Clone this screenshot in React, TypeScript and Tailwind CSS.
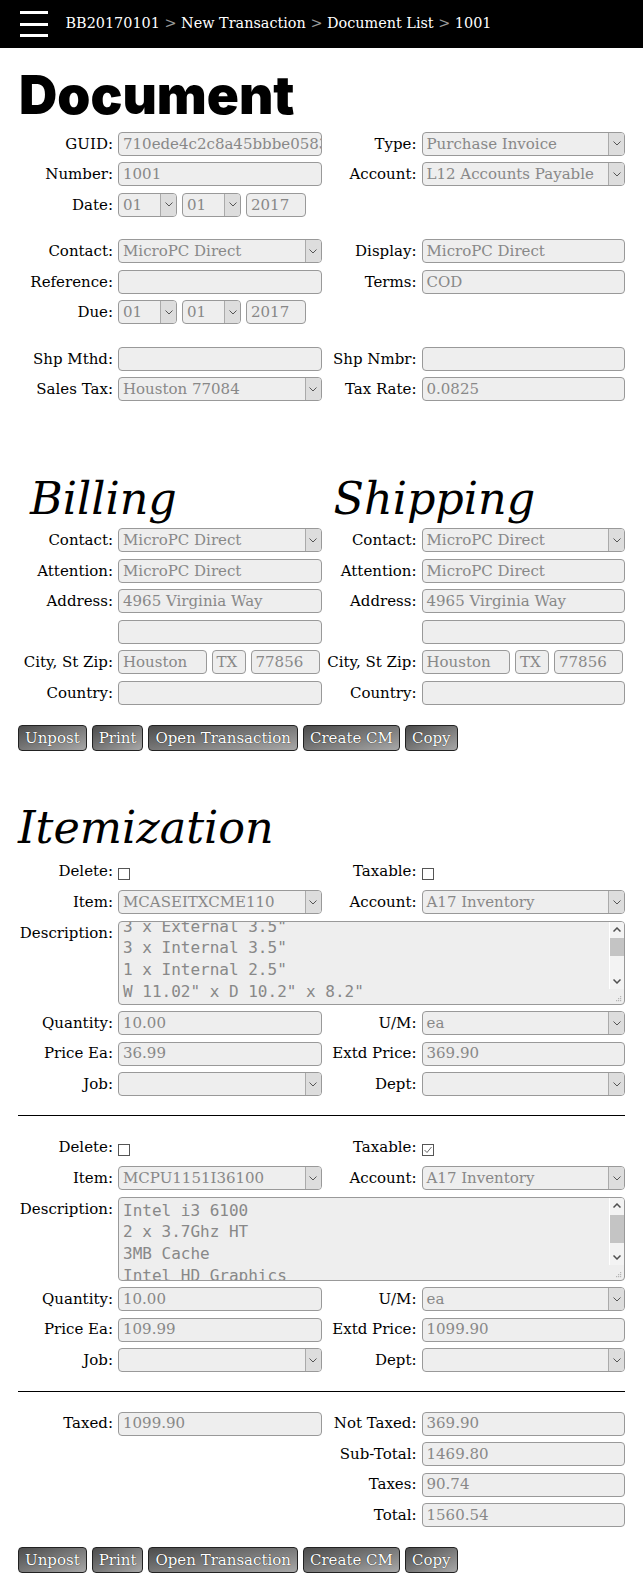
import React from "react";

function Chevron() {
  return (
    <svg width="8" height="5" viewBox="0 0 8 5">
      <path d="M0.5 0.5 L4 4 L7.5 0.5" fill="none" stroke="#555" strokeWidth="1" />
    </svg>
  );
}

function Input({ value = "", w = "w-full" }: { value?: string; w?: string }) {
  return (
    <div className={`${w} h-[24px] border border-[#999] rounded-[4px] bg-[#eeeeee] text-[#888] pl-[4px] flex items-center overflow-hidden whitespace-nowrap`}>
      {value}
    </div>
  );
}

function Select({ value = "", w = "w-full" }: { value?: string; w?: string }) {
  return (
    <div className={`${w} h-[24px] border border-[#999] rounded-[4px] bg-[#eeeeee] text-[#888] flex items-center overflow-hidden whitespace-nowrap`}>
      <span className="flex-1 min-w-0 pl-[4px] overflow-hidden">{value}</span>
      <span className="h-full w-[16px] shrink-0 border-l border-[#aaa] bg-[#dddddd] flex items-center justify-center">
        <Chevron />
      </span>
    </div>
  );
}

function Check({ checked = false }: { checked?: boolean }) {
  return (
    <div className="w-[12px] h-[12px] border border-[#555] bg-white mt-[4px] flex items-center justify-center">
      {checked && (
        <svg width="10" height="10" viewBox="0 0 10 10">
          <path d="M1.5 5 L4 7.5 L8.5 2" fill="none" stroke="#666" strokeWidth="1" />
        </svg>
      )}
    </div>
  );
}

function Field({ label, children }: { label?: string; children?: React.ReactNode }) {
  return (
    <div className="flex items-center gap-[5px] h-[30.5px]">
      <div className="w-[95px] shrink-0 text-right whitespace-nowrap">{label}</div>
      <div className="flex-1 min-w-0 flex items-center gap-[5px]">{children}</div>
    </div>
  );
}

function DateRow() {
  return (
    <>
      <Select value="01" w="w-[59px]" />
      <Select value="01" w="w-[59px]" />
      <Input value="2017" w="w-[60px]" />
    </>
  );
}

function TextArea({ lines, offset, thumbTop, thumbH }: { lines: string[]; offset: string; thumbTop: string; thumbH: string }) {
  return (
    <div className="h-[84px] border border-[#999] rounded-[4px] bg-[#eeeeee] flex overflow-hidden">
      <div className="flex-1 min-w-0 pl-[4px] overflow-hidden font-['DejaVu_Sans_Mono',monospace] text-[16px] leading-[21.8px] text-[#888]">
        <div className={offset}>
          {lines.map((l, i) => (
            <div key={i} className="whitespace-pre">{l}</div>
          ))}
        </div>
      </div>
      <div className="w-[15px] shrink-0 flex flex-col">
        <div className="flex-1 bg-[#f3f3f3] border-l border-white flex flex-col items-center">
          <div className="h-[15px] flex items-center justify-center">
            <svg width="8" height="5" viewBox="0 0 8 5"><path d="M0.5 4.5 L4 1 L7.5 4.5" fill="none" stroke="#505050" strokeWidth="1.5" /></svg>
          </div>
          <div className={`w-full bg-[#c4c4c4] ${thumbTop} ${thumbH}`}></div>
          <div className="mt-auto h-[15px] flex items-center justify-center">
            <svg width="8" height="5" viewBox="0 0 8 5"><path d="M0.5 0.5 L4 4 L7.5 0.5" fill="none" stroke="#505050" strokeWidth="1.5" /></svg>
          </div>
        </div>
        <div className="h-[15px] flex items-end justify-end pr-[2px] pb-[2px]">
          <svg width="7" height="7" viewBox="0 0 7 7" fill="#b5b5b5">
            <rect x="5" y="1" width="1.2" height="1.2" />
            <rect x="3" y="3" width="1.2" height="1.2" />
            <rect x="5" y="3" width="1.2" height="1.2" />
            <rect x="1" y="5" width="1.2" height="1.2" />
            <rect x="3" y="5" width="1.2" height="1.2" />
            <rect x="5" y="5" width="1.2" height="1.2" />
          </svg>
        </div>
      </div>
    </div>
  );
}

function Buttons({ className }: { className: string }) {
  const labels = ["Unpost", "Print", "Open Transaction", "Create CM", "Copy"];
  return (
    <div className={`flex gap-[5px] ${className}`}>
      {labels.map((l) => (
        <button
          key={l}
          className="h-[26px] px-[6px] rounded-[4px] border border-[#222] bg-linear-to-br from-[#4c4c4c] to-[#a8a8a8] text-white leading-none [text-shadow:0_0_1px_#000]"
        >
          {l}
        </button>
      ))}
    </div>
  );
}

function ItemBlock({ item, taxable, lines, offset, thumbTop, thumbH, qty, price, extd }: {
  item: string; taxable: boolean; lines: string[]; offset: string; thumbTop: string; thumbH: string; qty: string; price: string; extd: string;
}) {
  return (
    <div className="grid grid-cols-2">
      <Field label="Delete:"><Check /></Field>
      <Field label="Taxable:"><Check checked={taxable} /></Field>
      <Field label="Item:"><Select value={item} /></Field>
      <Field label="Account:"><Select value="A17 Inventory" /></Field>
      <div className="col-span-2 flex items-start gap-[5px] py-[3.25px]">
        <div className="w-[95px] shrink-0 text-right leading-[24px]">Description:</div>
        <div className="flex-1 min-w-0">
          <TextArea lines={lines} offset={offset} thumbTop={thumbTop} thumbH={thumbH} />
        </div>
      </div>
      <Field label="Quantity:"><Input value={qty} /></Field>
      <Field label="U/M:"><Select value="ea" /></Field>
      <Field label="Price Ea:"><Input value={price} /></Field>
      <Field label="Extd Price:"><Input value={extd} /></Field>
      <Field label="Job:"><Select /></Field>
      <Field label="Dept:"><Select /></Field>
    </div>
  );
}

function AddressCol({ title }: { title: string }) {
  return (
    <div>
      <h2 className="pl-[12px] italic text-[44.5px] leading-[46px]">{title}</h2>
      <div className="mt-[3px]">
        <Field label="Contact:"><Select value="MicroPC Direct" /></Field>
        <Field label="Attention:"><Input value="MicroPC Direct" /></Field>
        <Field label="Address:"><Input value="4965 Virginia Way" /></Field>
        <Field label=""><Input /></Field>
        <Field label="City, St Zip:">
          <Input value="Houston" w="w-[88.5px]" />
          <Input value="TX" w="w-[34px]" />
          <Input value="77856" w="w-[69px]" />
        </Field>
        <Field label="Country:"><Input /></Field>
      </div>
    </div>
  );
}

export default function App() {
  return (
    <div className="w-[643px] min-h-[1591px] bg-white text-black font-['DejaVu_Serif',serif] text-[15px]">
      <div className="h-[48px] bg-black flex items-center">
        <div className="ml-[20px] w-[28px] flex flex-col gap-[8.5px]">
          <div className="h-[3px] bg-white"></div>
          <div className="h-[3px] bg-white"></div>
          <div className="h-[3px] bg-white"></div>
        </div>
        <div className="ml-[17.5px] text-white text-[14.4px] whitespace-nowrap">
          BB20170101 <span className="text-[#999]">&gt;</span> New Transaction <span className="text-[#999]">&gt;</span> Document List <span className="text-[#999]">&gt;</span> 1001
        </div>
      </div>

      <div className="px-[18px] pb-[17px]">
        <h1 className="mt-[21px] ml-[1px] font-['Inter',sans-serif] font-black text-[53px] leading-[53px]">Document</h1>

        <div className="mt-[6.5px] grid grid-cols-2">
          <Field label="GUID:"><Input value="710ede4c2c8a45bbbe0583f1a2c" /></Field>
          <Field label="Type:"><Select value="Purchase Invoice" /></Field>
          <Field label="Number:"><Input value="1001" /></Field>
          <Field label="Account:"><Select value="L12 Accounts Payable" /></Field>
          <Field label="Date:"><DateRow /></Field>
          <div></div>
        </div>

        <div className="mt-[16px] grid grid-cols-2">
          <Field label="Contact:"><Select value="MicroPC Direct" /></Field>
          <Field label="Display:"><Input value="MicroPC Direct" /></Field>
          <Field label="Reference:"><Input /></Field>
          <Field label="Terms:"><Input value="COD" /></Field>
          <Field label="Due:"><DateRow /></Field>
          <div></div>
        </div>

        <div className="mt-[16px] grid grid-cols-2">
          <Field label="Shp Mthd:"><Input /></Field>
          <Field label="Shp Nmbr:"><Input /></Field>
          <Field label="Sales Tax:"><Select value="Houston 77084" /></Field>
          <Field label="Tax Rate:"><Input value="0.0825" /></Field>
        </div>

        <div className="mt-[71.5px] grid grid-cols-2">
          <AddressCol title="Billing" />
          <AddressCol title="Shipping" />
        </div>

        <Buttons className="mt-[17.3px]" />

        <h2 className="mt-[53.8px] italic text-[44.5px] leading-[46px]">Itemization</h2>

        <div className="mt-[5.25px]">
          <ItemBlock
            item="MCASEITXCME110"
            taxable={false}
            lines={['3 x External 3.5"', '3 x Internal 3.5"', '1 x Internal 2.5"', 'W 11.02" x D 10.2" x 8.2"']}
            offset="-mt-[6px]"
            thumbTop="mt-[1px]"
            thumbH="h-[18px]"
            qty="10.00"
            price="36.99"
            extd="369.90"
          />
        </div>

        <div className="my-[16px] h-px bg-black"></div>

        <ItemBlock
          item="MCPU1151I36100"
          taxable={true}
          lines={["Intel i3 6100", "2 x 3.7Ghz HT", "3MB Cache", "Intel HD Graphics"]}
          offset="pt-[2px]"
          thumbTop="mt-[2px]"
          thumbH="h-[28px]"
          qty="10.00"
          price="109.99"
          extd="1099.90"
        />

        <div className="my-[16px] h-px bg-black"></div>

        <div className="grid grid-cols-2">
          <Field label="Taxed:"><Input value="1099.90" /></Field>
          <Field label="Not Taxed:"><Input value="369.90" /></Field>
          <div></div>
          <Field label="Sub-Total:"><Input value="1469.80" /></Field>
          <div></div>
          <Field label="Taxes:"><Input value="90.74" /></Field>
          <div></div>
          <Field label="Total:"><Input value="1560.54" /></Field>
        </div>

        <Buttons className="mt-[17px]" />
      </div>
    </div>
  );
}
